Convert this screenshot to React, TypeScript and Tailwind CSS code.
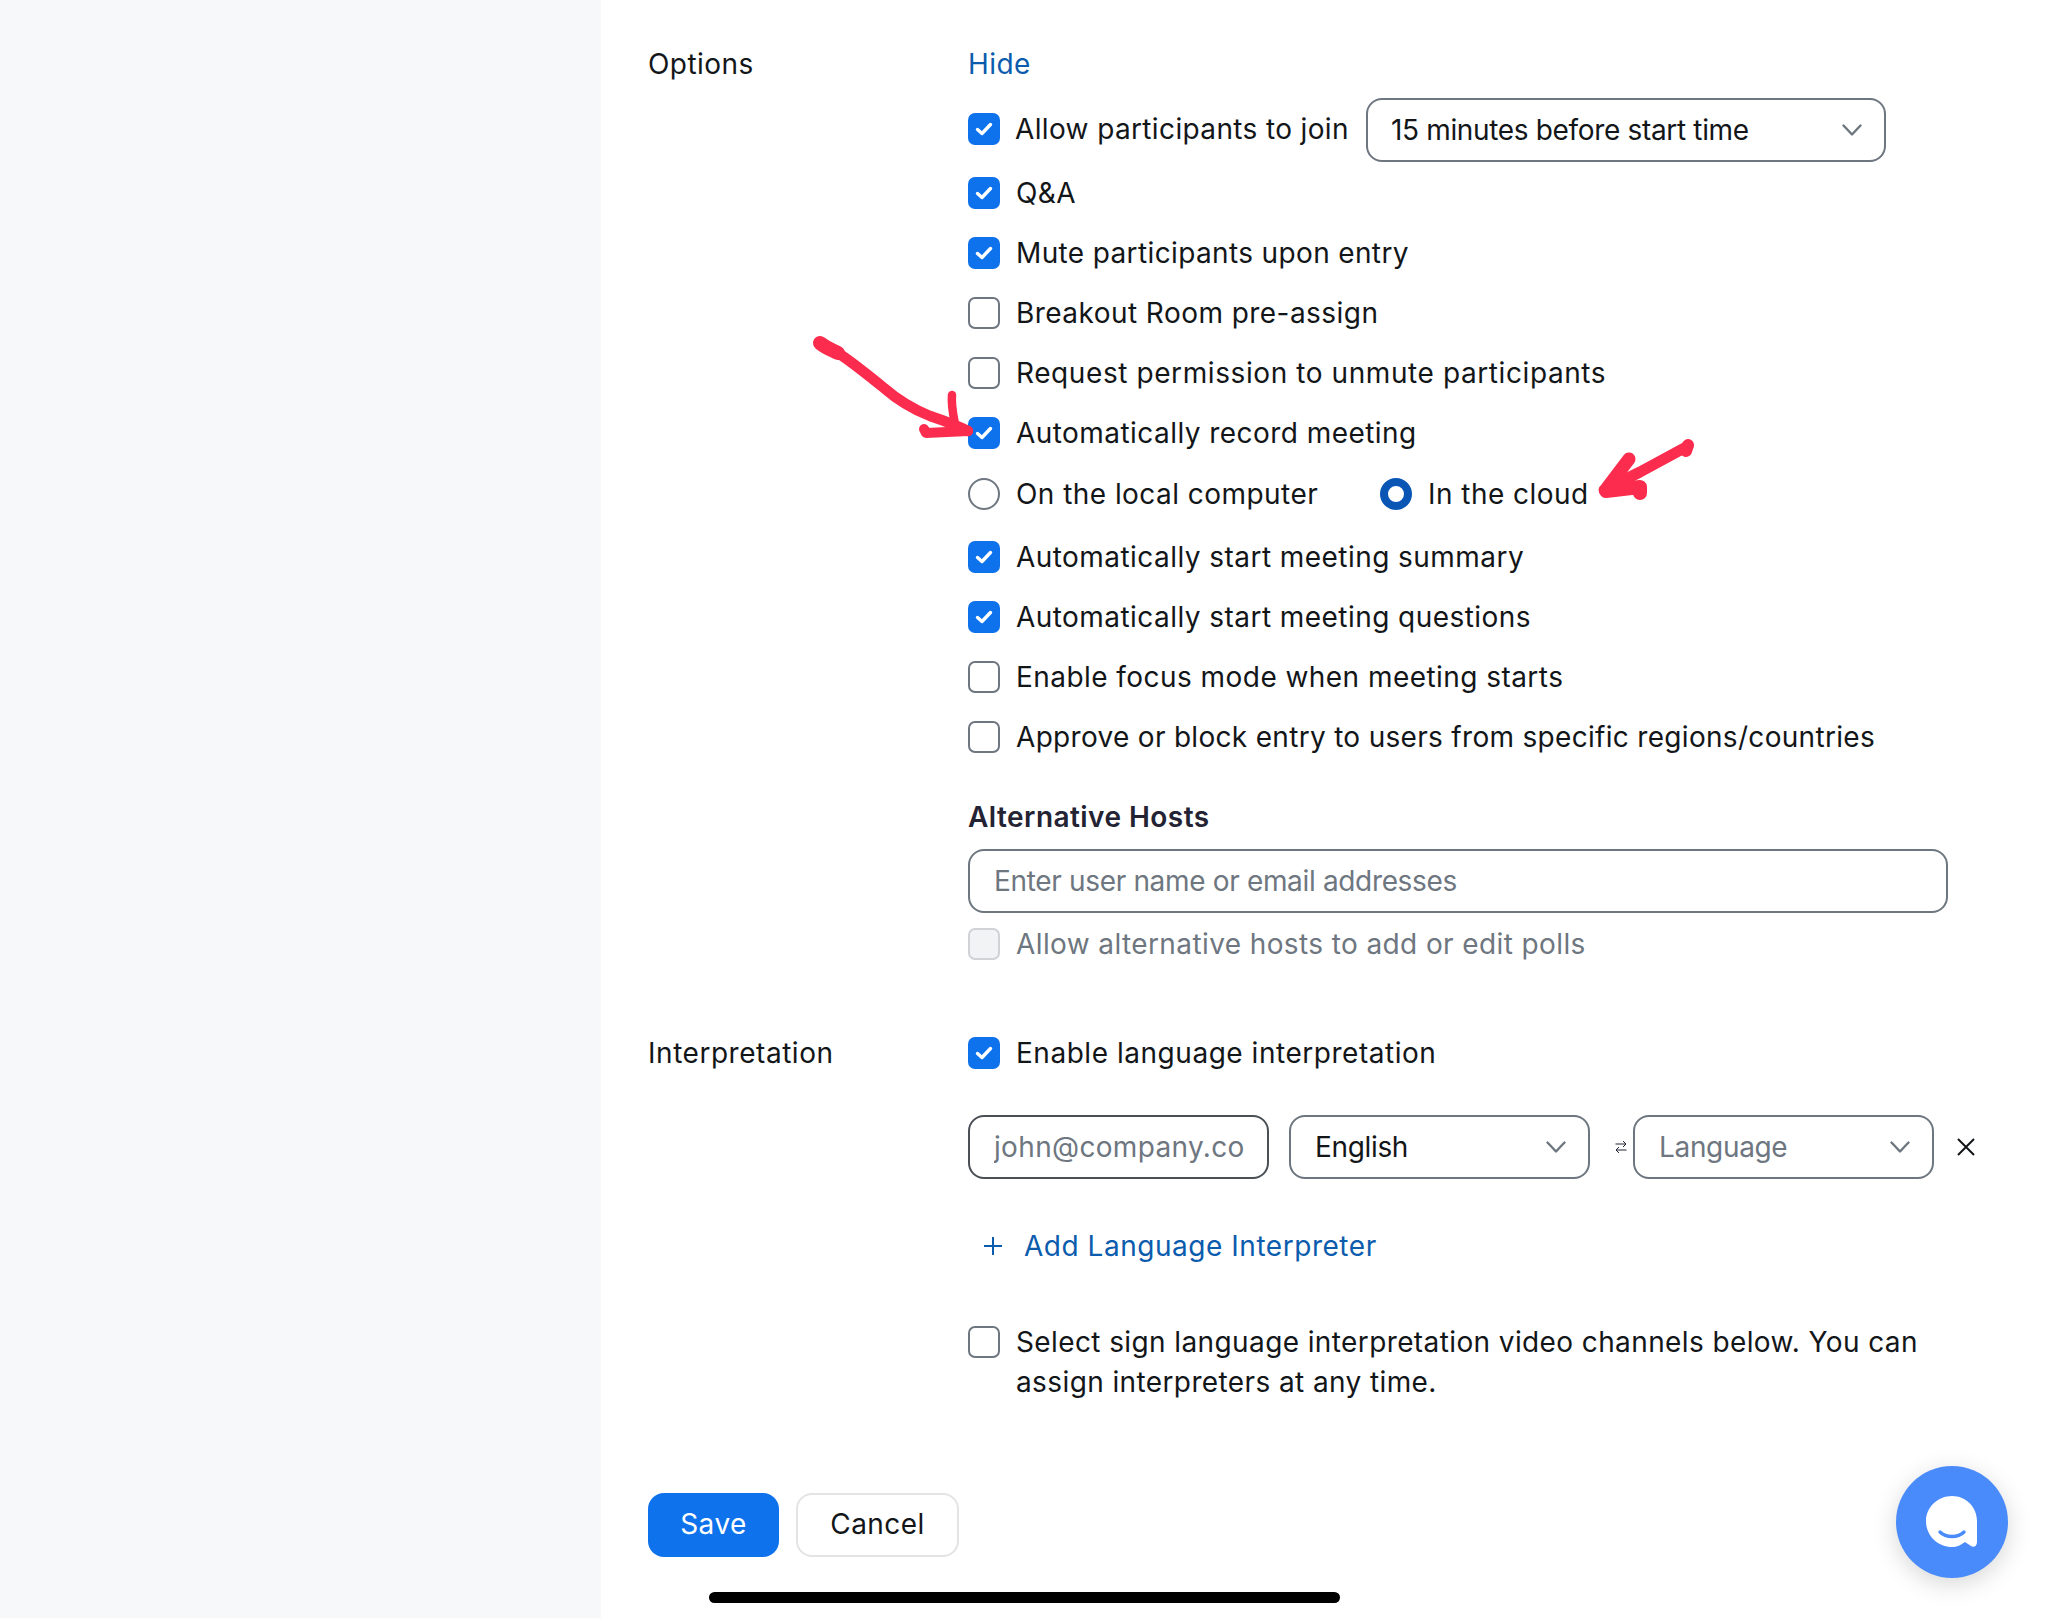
const font = "font-['Inter','Liberation_Sans',sans-serif]";

function Check({ on, disabled }: { on?: boolean; disabled?: boolean }) {
  if (on) {
    return (
      <span className="flex h-[32px] w-[32px] shrink-0 items-center justify-center rounded-[7px] bg-[#0e72ed]">
        <svg width="20" height="16" viewBox="0 0 20 16" fill="none">
          <path d="M3.5 8.5 L8 12.5 L16.5 3.5" stroke="#fff" strokeWidth="3.4" strokeLinecap="round" strokeLinejoin="round" />
        </svg>
      </span>
    );
  }
  return (
    <span
      className={
        disabled
          ? "h-[32px] w-[32px] shrink-0 rounded-[7px] border-2 border-[#d0d2d6] bg-[#f1f3f5]"
          : "h-[32px] w-[32px] shrink-0 rounded-[7px] border-2 border-[#6e7680] bg-white"
      }
    />
  );
}

function Row({ on, label, disabled, className }: { on?: boolean; label: string; disabled?: boolean; className?: string }) {
  return (
    <div className={`flex h-[60px] items-center gap-[16px] ${className ?? ""}`}>
      <Check on={on} disabled={disabled} />
      <span className={disabled ? "text-[#6e7680]" : "text-[#131619]"}>{label}</span>
    </div>
  );
}

function Chevron() {
  return (
    <svg className="shrink-0" width="20" height="12" viewBox="0 0 20 12" fill="none">
      <path d="M1.5 1.5 L10 10.5 L18.5 1.5" stroke="#6e7680" strokeWidth="2.4" strokeLinecap="round" strokeLinejoin="round" />
    </svg>
  );
}

function Box({ width, text, muted, chevron, dark, track }: { width: string; text: string; muted?: boolean; chevron?: boolean; dark?: boolean; track?: string }) {
  return (
    <div
      className={`flex h-[64px] items-center justify-between gap-[8px] whitespace-nowrap rounded-[16px] border-2 bg-white pl-[24px] pr-[22px] ${dark ? "border-[#4a5056]" : "border-[#6e7680]"} ${width}`}
    >
      <span className={`min-w-0 overflow-hidden ${track ?? "tracking-[-0.012em]"} ${muted ? "text-[#6e7680]" : "text-[#131619]"}`}>{text}</span>
      {chevron && <Chevron />}
    </div>
  );
}

function Radio({ on }: { on?: boolean }) {
  return on ? (
    <span className="h-[32px] w-[32px] shrink-0 rounded-full border-[8px] border-[#0956b5] bg-white" />
  ) : (
    <span className="h-[32px] w-[32px] shrink-0 rounded-full border-2 border-[#6e7680] bg-white" />
  );
}

export default function App() {
  return (
    <div className={`relative flex h-[1618px] w-[2048px] overflow-hidden bg-white text-[28px] leading-[40px] tracking-[0.016em] ${font}`}>
      <aside className="w-[601px] shrink-0 bg-[#f7f8fa]" />
      <main className="flex-1 pl-[47px] pt-[44px]">
        <div className="flex">
          <div className="w-[320px] shrink-0 text-[#131619]">Options</div>
          <div className="flex-1">
            <a className="block text-[#0b5cad]">Hide</a>
            <div className="mt-[14px] flex h-[64px] items-center">
              <div className="mb-[3px] flex items-center">
                <Check on />
                <span className="ml-[15px] tracking-[0.013em] text-[#131619]">Allow participants to join</span>
              </div>
              <div className="ml-[17px] flex h-[64px] w-[520px] items-center justify-between rounded-[16px] border-2 border-[#6e7680] pl-[23px] pr-[22px] tracking-[-0.012em] text-[#131619]">
                <span>15 minutes before start time</span>
                <Chevron />
              </div>
            </div>
            <Row on label="Q&A" className="mt-[1px]" />
            <Row on label="Mute participants upon entry" className="tracking-[0.013em]" />
            <Row label="Breakout Room pre-assign" />
            <Row label="Request permission to unmute participants" className="tracking-[0.021em]" />
            <Row on label="Automatically record meeting" />
            <div className="mt-[1px] flex h-[60px] items-center">
              <Radio />
              <span className="ml-[16px] w-[364px] text-[#131619]">On the local computer</span>
              <Radio on />
              <span className="ml-[16px] text-[#131619]">In the cloud</span>
            </div>
            <Row on label="Automatically start meeting summary" className="mt-[3px]" />
            <Row on label="Automatically start meeting questions" />
            <Row label="Enable focus mode when meeting starts" />
            <Row label="Approve or block entry to users from specific regions/countries" className="tracking-[0.011em]" />
            <div className="mt-[30px] font-semibold text-[#232333]">Alternative Hosts</div>
            <div className="mt-[12px]">
              <Box width="w-[980px]" text="Enter user name or email addresses" muted />
            </div>
            <Row disabled label="Allow alternative hosts to add or edit polls" className="mt-[1px] tracking-[0.014em]" />
          </div>
        </div>

        <div className="mt-[49px] flex">
          <div className="flex h-[60px] w-[320px] shrink-0 items-center tracking-[0.019em] text-[#131619]">Interpretation</div>
          <div className="flex-1">
            <Row on label="Enable language interpretation" className="tracking-[0.019em]" />
            <div className="mt-[32px] flex items-center">
              <Box width="w-[301px]" text="john@company.com" muted dark track="tracking-[0.012em]" />
              <div className="ml-[20px]">
                <Box width="w-[301px]" text="English" chevron />
              </div>
              <svg className="ml-[25px] mr-[6px] shrink-0" width="12" height="14" viewBox="0 0 12 14" fill="none">
                <path d="M0.5 4 H11 M8 1 L11 4 L8 7 M11.5 10 H1 M4 7 L1 10 L4 13" stroke="#232333" strokeWidth="1" />
              </svg>
              <Box width="w-[301px]" text="Language" muted chevron />
              <svg className="ml-[23px]" width="18" height="18" viewBox="0 0 18 18" fill="none">
                <path d="M1 1 L17 17 M17 1 L1 17" stroke="#131619" strokeWidth="2" />
              </svg>
            </div>
            <div className="mt-[47px] flex h-[40px] items-center pl-[16px] tracking-[0.019em] text-[#0b5cad]">
              <svg width="18" height="18" viewBox="0 0 18 18" fill="none">
                <path d="M9 0 V18 M0 9 H18" stroke="#0b5cad" strokeWidth="2" />
              </svg>
              <span className="ml-[22px]">Add Language Interpreter</span>
            </div>
            <div className="mt-[56px] flex gap-[16px]">
              <span className="flex h-[40px] items-center">
                <Check />
              </span>
              <p className="w-[960px] tracking-[0.014em] text-[#131619]">
                Select sign language interpretation video channels below. You can assign interpreters at any time.
              </p>
            </div>
          </div>
        </div>

        <div className="mt-[91px] flex gap-[17px]">
          <button className="h-[64px] w-[131px] rounded-[16px] bg-[#0e72ed] pb-[2px] text-white">Save</button>
          <button className="h-[64px] w-[163px] rounded-[16px] border-2 border-[#e4e4e6] bg-white pb-[2px] text-[#131619]">Cancel</button>
        </div>
      </main>

      <svg className="pointer-events-none absolute left-0 top-0" width="2048" height="1618" fill="none">
        <g stroke="#fb2c4e" strokeLinecap="round" strokeLinejoin="round">
          <path d="M820 343 C826 348 832 350 838 353" strokeWidth="14" />
          <path d="M838 353 C852 362 868 375 884 388 C900 402 915 410 930 416 C945 421 958 426 968 431" strokeWidth="10.5" />
          <path d="M952 395 C951 405 953 414 955 424" strokeWidth="8.5" />
          <path d="M924 429 L926 433 L968 431" strokeWidth="10" />
          <path d="M1688 445 L1686 451" strokeWidth="12" />
          <path d="M1688 446 L1640 472 L1604 490" strokeWidth="11" />
          <path d="M1629 459 L1607 488" strokeWidth="13" />
          <path d="M1606 491 L1640 487 L1640 493" strokeWidth="14" />
        </g>
      </svg>

      <div className="absolute left-[709px] top-[1592px] h-[11px] w-[631px] rounded-full bg-black" />

      <div className="absolute left-[1896px] top-[1466px] flex h-[112px] w-[112px] items-center justify-center rounded-full bg-[#4a8bfb] shadow-[0_6px_24px_rgba(0,0,0,0.16)]">
        <svg width="52" height="52" viewBox="0 0 52 52" fill="none">
          <path d="M26 0 C40 0 51 11 51 25 L51 46 C51 50 48 52 45 50 L39 46 C35 49 31 51 26 51 C12 51 0 40 0 25 C0 11 12 0 26 0 Z" fill="#fff" />
          <path d="M14 36 C20 42 32 42 38 36" stroke="#4a8bfb" strokeWidth="3.4" strokeLinecap="round" />
        </svg>
      </div>
    </div>
  );
}
